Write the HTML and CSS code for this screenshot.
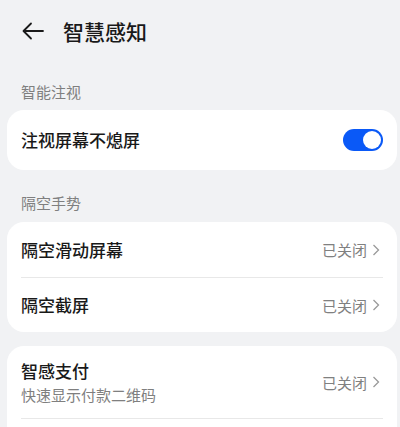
FILE: index.html
```html
<!DOCTYPE html>
<html lang="zh-CN">
<head>
    <meta charset="UTF-8">
    <meta name="viewport" content="width=device-width, initial-scale=1.0">
    <title>智慧感知</title>
    <link rel="stylesheet" href="styles.css">
</head>
<body>

<header class="topbar">
    <svg class="back" width="22" height="18" viewBox="0 0 22 18">
        <path d="M21 9H2M9 1.5L1.5 9L9 16.5" fill="none" stroke="#1a1a1a" stroke-width="1.8" stroke-linecap="round" stroke-linejoin="round"/>
    </svg>
    <h1>智慧感知</h1>
</header>

<div class="page">
    <div class="group-label first">智能注视</div>
    <div class="card">
        <div class="row">
            <span class="row-title">注视屏幕不熄屏</span>
            <span class="switch on"><span class="knob"></span></span>
        </div>
    </div>

    <div class="group-label">隔空手势</div>
    <div class="card">
        <div class="row">
            <span class="row-title">隔空滑动屏幕</span>
            <span class="row-value">已关闭 <svg class="chev" width="8" height="12" viewBox="0 0 8 12"><path d="M1.5 1L6.5 6L1.5 11" fill="none" stroke="#9a9a9a" stroke-width="1.3"/></svg></span>
        </div>
        <div class="row">
            <span class="row-title">隔空截屏</span>
            <span class="row-value">已关闭 <svg class="chev" width="8" height="12" viewBox="0 0 8 12"><path d="M1.5 1L6.5 6L1.5 11" fill="none" stroke="#9a9a9a" stroke-width="1.3"/></svg></span>
        </div>
    </div>

    <div class="card spaced">
        <div class="row tall">
            <div class="row-text">
                <span class="row-title">智感支付</span>
                <span class="row-sub">快速显示付款二维码</span>
            </div>
            <span class="row-value">已关闭 <svg class="chev" width="8" height="12" viewBox="0 0 8 12"><path d="M1.5 1L6.5 6L1.5 11" fill="none" stroke="#9a9a9a" stroke-width="1.3"/></svg></span>
        </div>
        <div class="row">
            <span class="row-title">&nbsp;</span>
        </div>
    </div>
</div>

</body>
</html>
```

FILE: styles.css
```css
body {
    font-family: "Noto Sans CJK SC", "Noto Sans", sans-serif;
    background-color: #f1f2f4;
    color: #191919;
    margin: 0;
    padding: 0;
    overflow: hidden;
}
.topbar {
    height: 62px;
    display: flex;
    align-items: center;
    padding-left: 22px;
    gap: 19px;
}
.topbar h1 {
    margin: 0;
    font-size: 21px;
    font-weight: 500;
    line-height: 24px;
}
.page {
    padding: 0 3px 0 7px;
}
.group-label {
    font-size: 15px;
    line-height: 20px;
    color: #7f7f7f;
    padding-left: 14px;
    margin: 23px 0 9px;
}
.group-label.first {
    margin-top: 20px;
    margin-bottom: 8px;
}
.card {
    background-color: white;
    border-radius: 17px;
}
.card.spaced {
    margin-top: 14px;
}
.row {
    height: 55px;
    display: flex;
    align-items: center;
    justify-content: space-between;
    margin: 0 14px;
    border-top: 1px solid #e8e8e8;
    box-sizing: border-box;
}
.row:first-child {
    border-top: none;
}
.group-label.first + .card .row {
    height: 60px;
}
.row.tall {
    height: 72px;
}
.row-text {
    display: flex;
    flex-direction: column;
}
.row-title {
    font-size: 17px;
    font-weight: 500;
    line-height: 22px;
}
.row-sub {
    font-size: 15px;
    line-height: 20px;
    color: #7f7f7f;
    margin-top: 3px;
}
.row-value {
    font-size: 15px;
    color: #808080;
    display: flex;
    align-items: center;
    gap: 5px;
    margin-right: 3px;
}
.switch {
    width: 40px;
    height: 22px;
    border-radius: 11px;
    background-color: #0a59f7;
    position: relative;
}
.switch .knob {
    position: absolute;
    right: 2px;
    top: 2px;
    width: 18px;
    height: 18px;
    border-radius: 50%;
    background-color: white;
}
```
